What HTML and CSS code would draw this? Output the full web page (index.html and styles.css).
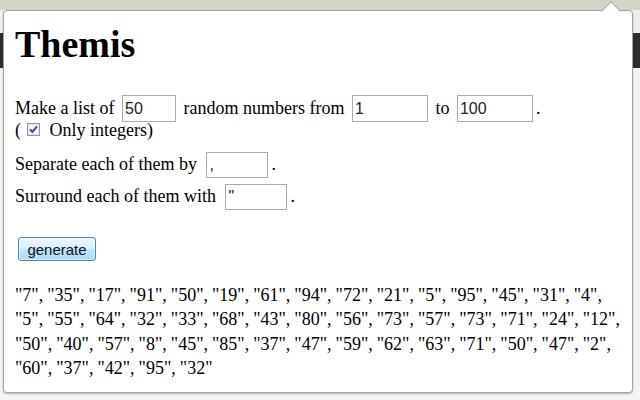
FILE: index.html
```html
<!DOCTYPE html>
<html lang="en">
<head>
    <meta charset="UTF-8">
    <title>Themis</title>
    <link rel="stylesheet" href="styles.css">
</head>
<body>
    <div class="popup">
        <h1 class="title">Themis</h1>

        <form class="options">
            <div class="row row-range">Make a list of <input class="field field-count" type="text" value="50"> random numbers from <input class="field field-wide" type="text" value="1"> to <input class="field field-wide" type="text" value="100">.</div>
            <div class="row row-check">(<svg class="check" width="13" height="13" viewBox="0 0 13 13">
                    <rect x="0.5" y="0.5" width="12" height="12" fill="#f4f5f7" stroke="#8c99a8"/>
                    <rect x="1.5" y="1.5" width="10" height="10" fill="none" stroke="#e2e6ec"/>
                    <path d="M3 6.3 L5.4 9 L10 3.4" fill="none" stroke="#3a46ad" stroke-width="2"/>
                </svg> Only integers)</div>
            <div class="row row-sep">Separate each of them by <input class="field field-short" type="text" value=",">.</div>
            <div class="row row-sur">Surround each of them with <input class="field field-short" type="text" value='"'>.</div>
            <button class="generate-btn" type="button">generate</button>
        </form>

        <p class="result">"7", "35", "17", "91", "50", "19", "61", "94", "72", "21", "5", "95", "45", "31", "4", "5", "55", "64", "32", "33", "68", "43", "80", "56", "73", "57", "73", "71", "24", "12", "50", "40", "57", "8", "45", "85", "37", "47", "59", "62", "63", "71", "50", "47", "2", "60", "37", "42", "95", "32"</p>
    </div>
</body>
</html>
```

FILE: styles.css
```css
* {
    box-sizing: border-box;
}

body {
    margin: 0;
    height: 400px;
    overflow: hidden;
    font-family: 'Liberation Serif', 'Times New Roman', serif;
    font-size: 18px;
    color: #000;
    background: linear-gradient(to bottom,
        #d4d5c9 0, #d4d5c9 10px,
        #eeeeee 10px, #eeeeee 33px,
        #2d2d2d 33px, #2d2d2d 68px,
        #f4f4f4 68px);
}

.popup {
    position: relative;
    width: 630px;
    height: 383px;
    margin: 10px 0 0 3px;
    padding: 0 8px 0 11px;
    background-color: #fff;
    border: 1px solid #a3a3a3;
    border-radius: 4px;
    box-shadow: 0 1px 2px rgba(0, 0, 0, 0.25);
}

/* little arrow pointing at the toolbar button */
.popup::before {
    content: '';
    position: absolute;
    top: -7px;
    left: 600px;
    width: 13px;
    height: 13px;
    background-color: #fff;
    border-top: 1px solid #a3a3a3;
    border-left: 1px solid #a3a3a3;
    transform: rotate(45deg);
}

.title {
    margin: 11px 0 0;
    font-size: 38px;
    line-height: 44px;
    font-weight: bold;
}

.options {
    margin-top: 29px;
}

.row {
    line-height: 24px;
    white-space: nowrap;
}

.row-range {
    height: 27px;
}

.row-check {
    height: 17px;
    line-height: 17px;
}

.row-sep {
    height: 27px;
    margin-top: 13px;
}

.row-sur {
    height: 27px;
    margin-top: 5px;
}

.check {
    margin: 0 5px 0 6px;
}

.field {
    height: 27px;
    margin: 0 3px;
    padding: 1px 2px;
    font-family: 'Liberation Sans', Arial, sans-serif;
    font-size: 16px;
    color: #222;
    border: 1px solid #a9abad;
    border-radius: 0;
    background-color: #fff;
    outline: none;
}

.field-count {
    width: 54px;
}

.field-wide {
    width: 76px;
}

.field-short {
    width: 62px;
    height: 26px;
    margin-left: 5px;
}

.generate-btn {
    display: block;
    width: 78px;
    height: 24px;
    margin: 26px 0 0 3px;
    padding: 0;
    font-family: 'Liberation Sans', Arial, sans-serif;
    font-size: 15px;
    color: #111;
    border: 1px solid #4a86b5;
    border-radius: 3px;
    background: linear-gradient(to bottom, #eaf6fd 0%, #d9f0fc 48%, #bee6fd 52%, #a9dbf6 100%);
    box-shadow: inset 0 0 0 1px rgba(255, 255, 255, 0.6);
    cursor: pointer;
}

.result {
    margin: 22px 0 0;
    line-height: 1.35;
    word-spacing: -0.5px;
}
```
